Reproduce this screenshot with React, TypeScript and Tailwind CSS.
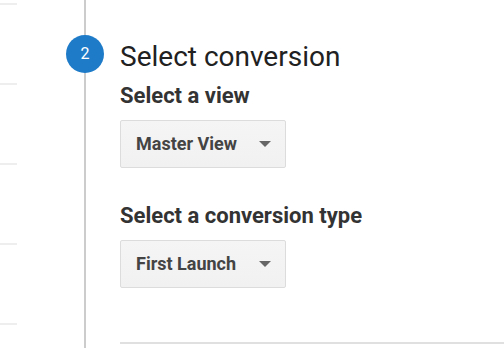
import React from 'react';

interface PickerProps {
    value: string;
}

const Picker: React.FC<PickerProps> = ({ value }) => (
    <button className="flex h-[48px] w-[166px] items-center justify-between rounded-[2px] border border-[#dcdcdc] bg-gradient-to-b from-[#f5f5f5] to-[#f1f1f1] pl-[15px] pr-[14px] text-[18px] font-bold leading-[22px] text-[#444]">
        <span>{value}</span>
        <svg width="12" height="6" viewBox="0 0 12 6">
            <path d="M0 0 L12 0 L6 6 Z" fill="#666" />
        </svg>
    </button>
);

const App: React.FC = () => {
    const ticks = [0, 1, 2, 3, 4];
    return (
        <div className="flex h-[348px] w-[504px] overflow-hidden bg-white font-['Roboto',sans-serif]">
            {/* left rail stubs */}
            <div className="flex w-[17px] flex-col gap-[78px] pt-[3px]">
                {ticks.map((t) => (
                    <div key={t} className="h-[2px] w-full bg-[#eeeeee]" />
                ))}
            </div>

            {/* stepper connector */}
            <div className="relative ml-[67px] w-[2px] bg-[#cccccc]">
                <div className="absolute left-[-18px] top-[35px] flex h-[38px] w-[38px] items-center justify-center rounded-full bg-[#1e7bc8] text-[16px] text-white">
                    2
                </div>
            </div>

            <div className="ml-[34px] flex flex-1 flex-col">
                <h2 className="mt-[41px] text-[28px] leading-[32px] text-[#212121]">Select conversion</h2>
                <h3 className="mt-[10px] text-[22px] font-bold leading-[26px] text-[#333]">Select a view</h3>
                <div className="mt-[11px]">
                    <Picker value="Master View" />
                </div>
                <h3 className="mt-[35px] text-[22px] font-bold leading-[26px] text-[#333]">Select a conversion type</h3>
                <div className="mt-[11px]">
                    <Picker value="First Launch" />
                </div>
                <div className="mt-[54px] h-[2px] w-full bg-[#e0e0e0]" />
            </div>
        </div>
    );
};

export default App;
